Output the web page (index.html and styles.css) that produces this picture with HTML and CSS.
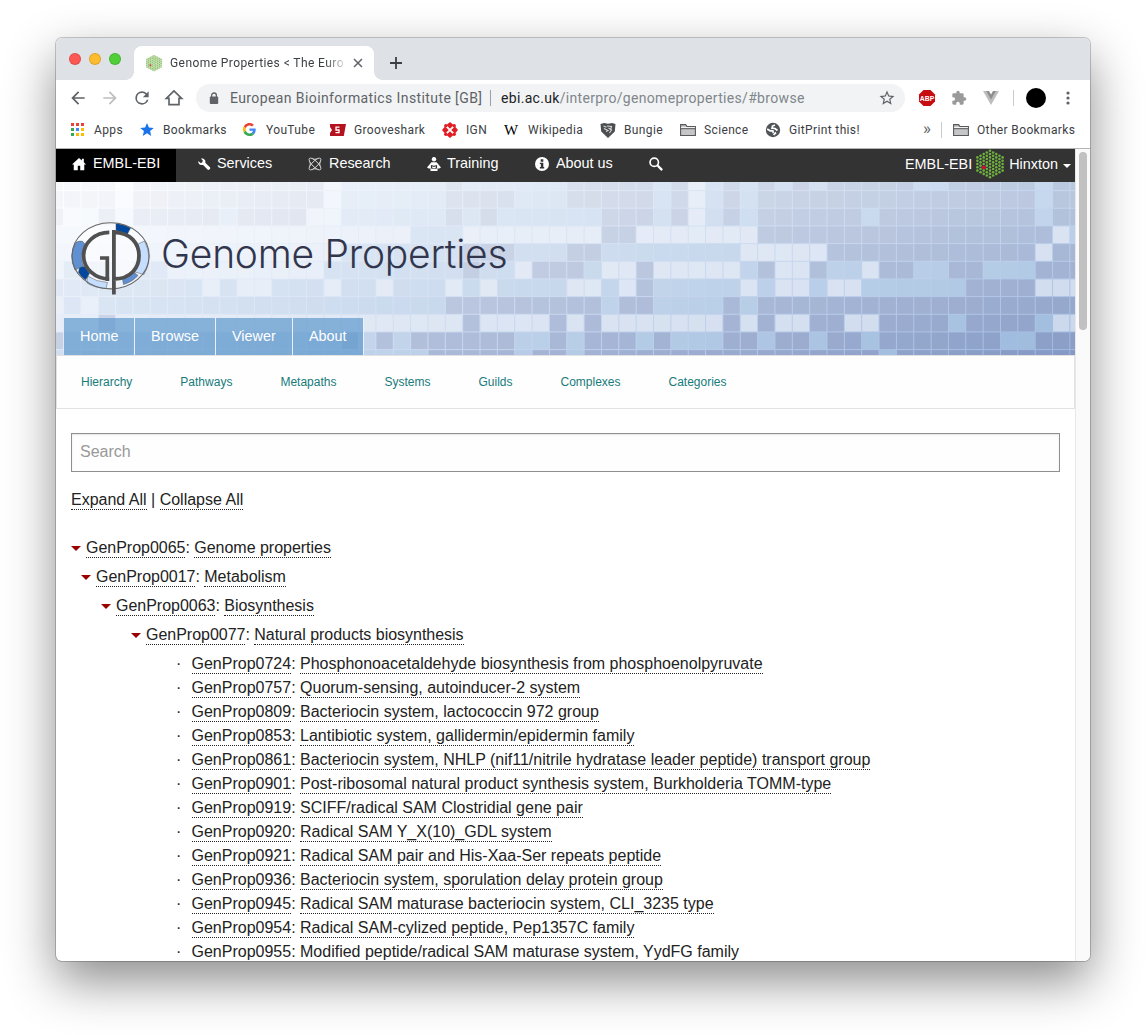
FILE: index.html
```html
<!DOCTYPE html>
<html lang="en">
<head>
<meta charset="utf-8">
<title>Genome Properties</title>
<link rel="stylesheet" href="styles.css">
</head>
<body>
<div class="window">
  <div class="tabstrip">
    <div class="lights"><i class="red"></i><i class="yellow"></i><i class="green"></i></div>
    <div class="tab">
      <svg class="favicon hexlogo" viewBox="0 0 28 30"></svg>
      <span class="tab-title">Genome Properties &lt; The Euro</span>
      <svg class="close" width="10" height="10" viewBox="0 0 10 10"><path d="M1 1l8 8M9 1L1 9" stroke="#5f6368" stroke-width="1.5"/></svg>
    </div>
    <svg class="newtab" width="14" height="14" viewBox="0 0 14 14"><path d="M7 1v12M1 7h12" stroke="#3c4043" stroke-width="1.8"/></svg>
  </div>

  <div class="toolbar">
    <svg class="tool" viewBox="0 0 24 24"><path fill="#5f6368" d="M20 11H7.83l5.59-5.59L12 4l-8 8 8 8 1.41-1.41L7.83 13H20v-2z"/></svg>
    <svg class="tool" viewBox="0 0 24 24"><path fill="#bcbec1" d="M12 4l-1.41 1.41L16.17 11H4v2h12.17l-5.58 5.59L12 20l8-8z"/></svg>
    <svg class="tool" viewBox="0 0 24 24"><path fill="#5f6368" d="M17.65 6.35A7.96 7.96 0 0 0 12 4a8 8 0 1 0 7.73 10h-2.08A6 6 0 1 1 12 6c1.66 0 3.14.69 4.22 1.78L13 11h7V4l-2.35 2.35z"/></svg>
    <svg class="tool" viewBox="0 0 24 24"><path fill="none" stroke="#5f6368" stroke-width="2" d="M12 3.5L2.8 12.4H6V20h12v-7.600h3.200z"/></svg>
    <div class="omnibox">
      <svg class="lock" width="10" height="13" viewBox="0 0 10 13"><path d="M2.600 5V3.400a2.400 2.400 0 0 1 4.800 0V5" fill="none" stroke="#5f6368" stroke-width="1.300"/><rect x=".8" y="4.500" width="8.400" height="7.500" rx="1" fill="#5f6368"/></svg>
      <span class="org">European Bioinformatics Institute [GB]</span>
      <span class="divider"></span>
      <span class="url"><b>ebi.ac.uk</b>/interpro/genomeproperties/#browse</span>
      <svg class="star" width="18" height="18" viewBox="0 0 24 24"><path fill="#5f6368" d="M22 9.240l-7.190-.62L12 2 9.190 8.630 2 9.240l5.460 4.730L5.820 21 12 17.270 18.180 21l-1.630-7.030L22 9.240zM12 15.400l-3.760 2.270 1-4.280-3.320-2.880 4.380-.38L12 6.100l1.710 4.040 4.380.38-3.320 2.880 1 4.280L12 15.400z"/></svg>
    </div>
    <svg class="abp" width="18" height="18" viewBox="0 0 18 18"><path d="M5.500 1h7L17 5.500v7L12.500 17h-7L1 12.500v-7z" fill="#c70d12"/><text x="9" y="11.900" text-anchor="middle" textLength="14.500" lengthAdjust="spacingAndGlyphs">ABP</text></svg>
    <svg class="puzzle" width="16" height="16" viewBox="0 0 24 24"><path fill="#9a9a9a" d="M20.500 11H19V7a2 2 0 0 0-2-2h-4V3.500a2.500 2.500 0 0 0-5 0V5H4a2 2 0 0 0-2 2v3.800h1.500a2.700 2.700 0 0 1 0 5.400H2V20c0 1.100.9 2 2 2h3.800v-1.500a2.700 2.700 0 0 1 5.400 0V22H17a2 2 0 0 0 2-2v-4h1.500a2.500 2.500 0 0 0 0-5z"/></svg>
    <svg class="vue" width="16" height="14" viewBox="0 0 16 14"><path d="M0 0h16L8 14z" fill="#bdbdbd"/><path d="M3.200 0h9.600L8 8.400z" fill="#8e8e8e"/><path d="M6 0h4L8 3.500z" fill="#fff"/></svg>
    <span class="divider tooldiv"></span>
    <span class="avatar"></span>
    <svg class="dots" width="4" height="14" viewBox="0 0 4 14" fill="#5f6368"><circle cx="2" cy="2" r="1.600"/><circle cx="2" cy="7" r="1.600"/><circle cx="2" cy="12" r="1.600"/></svg>
  </div>

  <div class="bookmarks">
    <div class="bm apps"><svg viewBox="0 0 16 16"><g fill="#ea4335"><path d="M1 1h3v3H1zM6 1h3v3H6zM11 1h3v3h-3z"/></g><path fill="#34a853" d="M1 6h3v3H1zM1 11h3v3H1z"/><path fill="#4285f4" d="M6 6h3v3H6z"/><path fill="#fbbc04" d="M11 6h3v3h-3zM6 11h3v3H6zM11 11h3v3h-3z"/></svg>Apps</div>
    <div class="bm marks"><svg viewBox="0 0 16 16"><path fill="#1a73e8" d="M8 1l1.900 4.500 4.900.4-3.700 3.200 1.100 4.800L8 11.300l-4.200 2.600 1.100-4.800L1.200 5.900l4.900-.4z"/></svg>Bookmarks</div>
    <div class="bm youtube"><svg viewBox="0 0 48 48"><path fill="#EA4335" d="M24 9.500c3.500 0 6.700 1.200 9.200 3.600l6.900-6.900A23.900 23.900 0 0 0 2.600 13.200l8 6.200C12.400 13.700 17.700 9.500 24 9.500z"/><path fill="#4285F4" d="M47 24.500c0-1.600-.2-3.100-.4-4.500H24v9h12.900c-.6 3-2.300 5.500-4.800 7.200l7.700 6C44.400 38 47 32 47 24.500z"/><path fill="#FBBC05" d="M10.500 28.600a14.500 14.500 0 0 1 0-9.200l-8-6.200a24 24 0 0 0 0 21.600z"/><path fill="#34A853" d="M24 48c6.500 0 11.900-2.100 15.900-5.800l-7.700-6c-2.200 1.500-4.900 2.300-8.200 2.300-6.300 0-11.600-4.200-13.500-9.900l-8 6.200C6.500 42.600 14.600 48 24 48z"/></svg>YouTube</div>
    <div class="bm groove"><svg viewBox="0 0 16 16"><path d="M0 2h16l-2.200 12H0v-3l2-3-2-3z" fill="#b5121f"/><path d="M9.500 5.200H6V8h3v2.700H5.500" fill="none" stroke="#fff" stroke-width="1.300"/></svg>Grooveshark</div>
    <div class="bm ign"><svg viewBox="0 0 16 16"><g fill="#e31b23"><path d="M4.500 3L8 0l3.500 3L8 6.800zM4.500 13L8 16l3.500-3L8 9.200zM3 4.500L0 8l3 3.500L6.800 8zM13 4.500L16 8l-3 3.500L9.200 8z"/><circle cx="3.800" cy="3.800" r="1.700"/><circle cx="12.200" cy="3.800" r="1.700"/><circle cx="3.800" cy="12.200" r="1.700"/><circle cx="12.200" cy="12.200" r="1.700"/></g></svg>IGN</div>
    <div class="bm wiki"><span class="w">W</span>Wikipedia</div>
    <div class="bm bungie"><svg viewBox="0 0 16 16"><path d="M.5 2L4 1l4 .7L12 1l3.500 1-.7 7.500L8 16 1.200 9.500z" fill="#4c4f52"/><path d="M3.500 4l3 1.200M7 4l4.500.5-1 3.500M4 6.500l4 2-2 1M8.500 6l3 2-2 3" stroke="#d8d8d8" stroke-width="1.100" fill="none"/></svg>Bungie</div>
    <div class="bm science"><svg viewBox="0 0 16 16"><path d="M.6 13.500V2.600h5l1.500 2h8.300v8.900z" fill="#c6c6c6" stroke="#55585c" stroke-width="1.100"/><path d="M1 5.700h14" stroke="#fff"/><path d="M1 6.700h14" stroke="#55585c"/></svg>Science</div>
    <div class="bm git"><svg viewBox="0 0 16 16"><circle cx="8" cy="8" r="7.200" fill="#505357"/><path d="M2.200 7l3 1.800h2.600l.5 2.200M12.500 8.500L10 6.500 7 6.200 7.500 4l2.500-1M8.500 12.800l2.500-2.300" fill="none" stroke="#fff" stroke-width="1.700"/></svg>GitPrint this!</div>
    <span class="more">»</span>
    <span class="divider"></span>
    <div class="bm other"><svg viewBox="0 0 16 16"><path d="M.6 13.500V2.600h5l1.500 2h8.300v8.900z" fill="#c6c6c6" stroke="#55585c" stroke-width="1.100"/><path d="M1 5.700h14" stroke="#fff"/><path d="M1 6.700h14" stroke="#55585c"/></svg>Other Bookmarks</div>
  </div>

  <div class="viewport">
    <div class="page">
      <nav class="masthead">
        <a class="active m1"><svg viewBox="0 0 16 16"><path d="M8 1L0 8.500h2V15h4.600v-5h2.800v5H14V8.500h2l-2.500-2.400V2h-2.200v2z"/></svg>EMBL-EBI</a>
        <a class="m2"><svg viewBox="0 0 16 16"><path d="M1.500 4.500L4 6.800 6 6.200 6.600 4 4.500 1.800C7 1 10.500 3 9.500 6.500l5.300 5.300c.8.900.3 2.500-1.300 2.900-.7.100-1.200-.2-1.500-.5L7 9C3.500 10 1 7.500 1.500 4.500z"/></svg>Services</a>
        <a class="m3"><svg viewBox="0 0 16 16"><g fill="none" stroke="#ddd" stroke-width="1"><ellipse cx="8" cy="8" rx="9" ry="3.200" transform="rotate(45 8 8)"/><ellipse cx="8" cy="8" rx="9" ry="3.200" transform="rotate(-45 8 8)"/><path d="M5 1.500c2 1.400 4 1.400 6 0M5 14.500c2-1.400 4-1.400 6 0M1.500 5c1.400 2 1.400 4 0 6M14.500 5c-1.400 2-1.400 4 0 6"/></g></svg>Research</a>
        <a class="m4"><svg viewBox="0 0 16 16"><circle cx="8" cy="2.600" r="2.500"/><path d="M5 6h6l5 6-2 1h-2v3H4v-3H2l-2-1z"/><path d="M4.500 9L8 10l3.500-1v4L8 13.800 4.500 13z" fill="#333"/><path d="M6 10.700l2 .6 2-.6v1.800l-2 .5-2-.5z"/></svg>Training</a>
        <a class="m5"><svg viewBox="0 0 16 16"><circle cx="8" cy="8" r="8"/><path d="M6.500 2.500h3v2.800h-3zM5.500 6.500h4v5h1V13h-5v-1.500h1.200V8H5.500z" fill="#333"/></svg>About us</a>
        <a class="m6"><svg viewBox="0 0 16 16"><circle cx="6" cy="6" r="4.800" fill="none" stroke="#fff" stroke-width="1.900"/><path d="M9.500 9.500l5.500 5.500" stroke="#fff" stroke-width="2.600"/></svg></a>
        <span class="location"><span>EMBL-EBI</span><svg class="hexlogo" viewBox="0 0 28 30"></svg><span>Hinxton</span><i class="caret"></i></span>
      </nav>

      <header class="banner">
        <svg class="tiles" viewBox="0 0 1019 173" width="1019" height="173"></svg>
        <div class="brand">
          <svg class="logo" width="80" height="73" viewBox="0 0 80 73">
            <ellipse cx="39.600" cy="33.800" rx="38.600" ry="33.100" fill="#fff" fill-opacity=".5"/>
            <g stroke="#555" stroke-width=".5">
              <path d="M45 1.500q9 1 14.500 4.500L56 13q-5-3.500-11-4.500z" fill="#00479d"/>
              <path d="M67 22l6.500-3q9 17-.5 33.500L64 50q7-14 3-28z" fill="#c5deff"/>
              <path d="M51.500 57l11-7 4.500 3.500q-5 6-14.500 9z" fill="#6090d2"/>
              <path d="M16.500 54q9 6 20 6.500l-1.500 6q-11-.5-19-5.500z" fill="#c5deff"/>
              <path d="M8.500 45l5-.5 5 7-4 6.500q-5-3.500-7-7.500z" fill="#00479d"/>
              <path d="M5 20.500q3-2 6.500-1.200L14 22q-6 12-1.500 22L4 48q-7-14 1-27.500z" fill="#6090d2"/>
            </g>
            <ellipse cx="39.600" cy="33.800" rx="38.600" ry="33.100" fill="none" stroke="#666" stroke-width="1.100"/>
            <path d="M38.300 10.400A25.700 23.300 0 0 0 38.300 57M29 36h7.300v23" fill="none" stroke="#505050" stroke-width="3.700"/>
            <path d="M42.900 8v64.500M42.900 10.400C60 10.400 68 22 68 33.700S60 57 42.900 57" fill="none" stroke="#505050" stroke-width="3.800"/>
          </svg>
          <h1>Genome Properties</h1>
        </div>
        <nav class="tabs"><a class="t1">Home</a><a class="t2">Browse</a><a class="t3">Viewer</a><a class="t4">About</a></nav>
      </header>

      <nav class="submenu"><a>Hierarchy</a><a>Pathways</a><a>Metapaths</a><a>Systems</a><a>Guilds</a><a>Complexes</a><a>Categories</a></nav>

      <main>
        <input class="search" type="text" placeholder="Search">
        <p class="actions"><a>Expand All</a> | <a>Collapse All</a></p>
        <div class="node"><i></i><a>GenProp0065</a>: <a>Genome properties</a></div>
        <div class="node lvl1"><i></i><a>GenProp0017</a>: <a>Metabolism</a></div>
        <div class="node lvl2"><i></i><a>GenProp0063</a>: <a>Biosynthesis</a></div>
        <div class="node lvl3"><i></i><a>GenProp0077</a>: <a>Natural products biosynthesis</a></div>
        <ul>
          <li><a>GenProp0724</a>: <a>Phosphonoacetaldehyde biosynthesis from phosphoenolpyruvate</a></li>
          <li><a>GenProp0757</a>: <a>Quorum-sensing, autoinducer-2 system</a></li>
          <li><a>GenProp0809</a>: <a>Bacteriocin system, lactococcin 972 group</a></li>
          <li><a>GenProp0853</a>: <a>Lantibiotic system, gallidermin/epidermin family</a></li>
          <li><a>GenProp0861</a>: <a>Bacteriocin system, NHLP (nif11/nitrile hydratase leader peptide) transport group</a></li>
          <li><a>GenProp0901</a>: <a>Post-ribosomal natural product synthesis system, Burkholderia TOMM-type</a></li>
          <li><a>GenProp0919</a>: <a>SCIFF/radical SAM Clostridial gene pair</a></li>
          <li><a>GenProp0920</a>: <a>Radical SAM Y_X(10)_GDL system</a></li>
          <li><a>GenProp0921</a>: <a>Radical SAM pair and His-Xaa-Ser repeats peptide</a></li>
          <li><a>GenProp0936</a>: <a>Bacteriocin system, sporulation delay protein group</a></li>
          <li><a>GenProp0945</a>: <a>Radical SAM maturase bacteriocin system, CLI_3235 type</a></li>
          <li><a>GenProp0954</a>: <a>Radical SAM-cylized peptide, Pep1357C family</a></li>
          <li><a>GenProp0955</a>: <a>Modified peptide/radical SAM maturase system, YydFG family</a></li>
        </ul>
      </main>
    </div>
    <div class="scrollbar"><div class="thumb"></div></div>
  </div>
</div>
<script src="graphics.js"></script>
</body>
</html>
```

FILE: styles.css
```css
* { box-sizing: border-box; }
body {
  margin: 0;
  height: 1035px;
  padding: 38px 56px 0;
  background: #fff;
  overflow: hidden;
  font-family: "Liberation Sans", Arial, sans-serif;
}
svg { display: block; flex: none; }
.window {
  width: 1034px;
  height: 923px;
  display: flex;
  flex-direction: column;
  overflow: hidden;
  border-radius: 6px;
  background: #fff;
  box-shadow: 0 0 0 1px rgba(0,0,0,.2), 0 20px 50px rgba(0,0,0,.46);
}
.divider { width: 1px; height: 16px; background: #c8cacd; flex: none; }

/* browser tabs */
.tabstrip { flex: none; height: 42px; background: #dee1e6; display: flex; }
.lights { width: 78px; padding: 15px 0 0 13px; display: flex; gap: 8px; }
.lights i { width: 12px; height: 12px; border-radius: 50%; border: 1px solid rgba(0,0,0,.12); }
.red { background: #fc5753; }
.yellow { background: #fdbc2e; }
.green { background: #50cf38; }
.tab {
  position: relative;
  width: 240px;
  height: 34px;
  margin-top: 8px;
  padding-left: 12px;
  border-radius: 8px 8px 0 0;
  background: #fff;
  display: flex;
  align-items: center;
}
.tab::before, .tab::after { content: ""; position: absolute; bottom: 0; width: 8px; height: 8px; }
.tab::before { left: -8px; background: radial-gradient(circle at 0 0, transparent 7.5px, #fff 8px); }
.tab::after { right: -8px; background: radial-gradient(circle at 100% 0, transparent 7.5px, #fff 8px); }
.favicon { width: 16px; height: 17px; margin-right: 8px; background: #c9e2ba; clip-path: polygon(50% 0, 100% 25%, 100% 75%, 50% 100%, 0 75%, 0 25%); opacity: .8; }
.tab-title {
  width: 176px;
  white-space: nowrap;
  font: 12px/16px Roboto, sans-serif;
  letter-spacing: .42px;
  color: #3c4043;
  -webkit-mask-image: linear-gradient(90deg, #000 155px, transparent 178px);
  mask-image: linear-gradient(90deg, #000 155px, transparent 178px);
}
.close { margin-left: 7px; }
.newtab { margin: 18px 0 0 15px; }

/* address bar */
.toolbar { flex: none; height: 36px; padding-left: 12px; display: flex; align-items: center; }
.tool { width: 20px; height: 20px; margin-right: 12px; }
.omnibox {
  width: 709px;
  height: 28px;
  border-radius: 14px;
  padding: 0 9px 0 13px;
  background: #f1f3f4;
  display: flex;
  align-items: center;
  font: 14px/20px Roboto, sans-serif;
  color: #5f6368;
  white-space: nowrap;
}
.lock { margin-right: 11px; }
.org { width: 260px; letter-spacing: .4px; }
.omnibox .divider { background: #9aa0a6; }
.url { margin-left: 10px; flex: 1; letter-spacing: .32px; color: #80868b; }
.url b { font-weight: 400; color: #202124; }
.abp { margin-left: 13px; }
.abp text { font: 700 8px "Liberation Sans", sans-serif; fill: #fff; }
.puzzle { margin-left: 15px; }
.vue { margin-left: 16px; }
.tooldiv { margin-left: 14px; }
.avatar { width: 20px; height: 20px; border-radius: 50%; background: #000; margin-left: 12px; }
.dots { margin-left: 20px; }

/* bookmarks bar */
.bookmarks {
  flex: none;
  height: 33px;
  padding: 0 0 5px 14px;
  border-bottom: 1px solid #b4b4b4;
  display: flex;
  align-items: center;
  font: 12px/16px Roboto, sans-serif;
  letter-spacing: .36px;
  color: #3c4043;
  white-space: nowrap;
}
.bm { display: flex; align-items: center; gap: 8px; }
.bm svg { width: 16px; height: 16px; }
.bm.youtube svg { width: 13px; height: 13px; margin: 0 2px 0 1px; }
.w { width: 16px; font: 15px/16px "Liberation Serif", serif; color: #000; letter-spacing: 0; }
.apps { width: 69px; }
.marks { width: 103px; }
.youtube { width: 88px; }
.groove { width: 112px; }
.ign { width: 62px; }
.wiki { width: 96px; }
.bungie { width: 80px; }
.science { width: 85px; }
.git { width: 158px; }
.more { width: 18px; font-size: 17px; color: #5f6368; padding-bottom: 3px; }
.other { margin-left: 11px; }

/* page */
.viewport { flex: 1; min-height: 0; display: flex; }
.page { width: 1019px; overflow: hidden; }
.scrollbar { width: 15px; background: #fafafa; border-left: 1px solid #e8e8e8; padding: 3px 3px; }
.thumb { width: 8px; height: 178px; border-radius: 4px; background: #c1c1c1; }
.masthead {
  height: 33px;
  background: #333;
  color: #fff;
  font-size: 14.4px;
  line-height: 29px;
  display: flex;
}
.masthead a { display: flex; align-items: center; height: 29px; gap: 7px; }
.masthead a svg { width: 14px; height: 14px; fill: #fff; }
.masthead .active { background: #000; height: 33px; padding: 0 0 4px 16px; }
.masthead .m1 { width: 120px; margin-right: 21px; }
.masthead .m2, .masthead .m4 { gap: 6px; }
.m2 { width: 111px; }
.m3 { width: 119px; }
.m4 { width: 108px; }
.m5 { width: 113px; }
.masthead .m6 { margin-left: 1px; }
.location { margin-left: auto; padding-right: 4px; display: flex; align-items: center; height: 30px; }
.location .hexlogo { width: 28px; height: 30px; margin: 0 5px 0 4px; }
.caret { border: 4px solid transparent; border-top-color: #fff; border-bottom: 0; margin-left: 5px; margin-top: 3px; }

.banner { position: relative; height: 173px; background: #e8eef8; display: flex; flex-direction: column; justify-content: space-between; }
.tiles { position: absolute; inset: 0; }
.brand { position: relative; display: flex; padding: 40px 0 0 15px; }
h1 {
  margin: 8px 0 0 10px;
  font: 300 39px/48px Inter, "Liberation Sans", sans-serif;
  letter-spacing: -.24px;
  color: #32364d;
  white-space: nowrap;
}
.tabs { position: relative; display: flex; padding-left: 8px; }
.tabs a {
  height: 37px;
  padding-left: 16px;
  border-right: 1px solid #e9f0f9;
  background: rgba(85, 147, 202, .66);
  font-size: 14.4px;
  line-height: 37px;
  color: #fff;
}
.t1 { width: 71px; }
.t2 { width: 81px; }
.t3 { width: 77px; }
.t4 { width: 71px; }
.submenu {
  height: 54px;
  border: 1px solid #e2e2e2;
  background: #fefefe;
  padding-left: 24px;
  display: flex;
  gap: 48px;
  font-size: 12px;
  line-height: 52px;
  color: #177b7b;
}
main { padding: 24px 15px 0; font-size: 16px; line-height: 24px; color: #222; }
.search {
  display: block;
  width: 100%;
  height: 39px;
  border: 1px solid #8f8f8f;
  padding: 0 8px 1px;
  background: #fefefe;
  box-shadow: inset 0 1px 2px rgba(0,0,0,.1);
  font: 16px "Liberation Sans", sans-serif;
}
.search::placeholder { color: #999; }
.actions { margin: 16px 0 24px; }
main a { border-bottom: 1px dotted #222; padding-bottom: 1px; }
.node { height: 29px; white-space: pre; letter-spacing: -.02px; }
.node i { display: inline-block; border: 5px solid transparent; border-top-color: #990000; border-bottom: 0; margin-right: 5px; vertical-align: 2px; }
.lvl1 { padding-left: 10px; }
.lvl2 { padding-left: 30px; }
.lvl3 { padding-left: 60px; }
ul { list-style: none; margin: 0; padding: 0 0 0 105px; white-space: nowrap; }
li::before { content: "·"; display: inline-block; width: 15.500px; }
```

FILE: graphics.js
```js
const SVG = "http://www.w3.org/2000/svg";

function shape(parent, name, attrs) {
  const el = document.createElementNS(SVG, name);
  for (const key in attrs) el.setAttribute(key, attrs[key]);
  parent.appendChild(el);
}

// Banner mosaic: l = light, b = blue, d = dark tile
const rows = [
  "ddddldddddddddddlbbb" + "bbbdbbbbbbdddddbdlbd" + "bdbdbdddddbbdddddbdd",
  "ddddldddddddddddlbbb" + "bbbddddbbbdddddbdlbd" + "bddddddddddddddddbdd",
  "dlldldddddbddddllbbb" + "bbbdbdbbbbbbdddbdlbd" + "bddddddbdddddddddbdd",
  "llllllllllllllllllll" + "lbbbllllllllddllllll" + "ldddddddddddddddddlb",
  "lllllllllllllllllbbb" + "bbbbdddbbbddbbbbbbbb" + "lllllddddddddddddldd",
  "lbbblbblllllllllbbbb" + "bbbbdbbldddblldlllll" + "bdlldbblddbbddbbbddd",
  "bbbbbbbbblbllbbblbbl" + "bbblblbbbbllbldbbbbb" + "lbllbllbbbbbbddddlll",
  "lblbbbbbbbbbbbbbbbbb" + "bbbdddddddddbddbbbbd" + "bddddddddddddddddddd",
  "llldllllllllllllllll" + "lllldlllldldllllllld" + "ldllddllddddbddddbll",
  "dbbbbbbbbbbbbbbbbdbd" + "bddddddbbdbdddbdbbbd" + "dbddbddbdddddddbbddd",
  "bbbbbbbbbbbbbbbbbbbb" + "bbdddddbddbddddddddd" + "ddddddddbddddddddddd"
];

// Corner colours: top-left, top-right, bottom-left, bottom-right
const palette = {
  l: [[252, 253, 255], [222, 231, 245], [226, 234, 246], [198, 212, 233]],
  b: [[247, 249, 253], [198, 216, 237], [207, 221, 239], [150, 182, 219]],
  d: [[247, 248, 251], [186, 200, 223], [192, 203, 227], [130, 151, 195]],
  line: [[254, 255, 255], [198, 215, 239], [221, 231, 248], [156, 182, 222]]
};

function tint(kind, u, v) {
  const c = palette[kind];
  return "rgb(" + [0, 1, 2].map(i => Math.round(
    (c[0][i] * (1 - u) + c[1][i] * u) * (1 - v) + (c[2][i] * (1 - u) + c[3][i] * u) * v
  )).join(",") + ")";
}

const tiles = document.querySelector(".tiles");
const stepX = 17.35, stepY = 17.67;
rows.forEach((row, r) => {
  [...row].forEach((kind, k) => {
    const x = 7.6 + stepX * (k - 1), y = 8.6 + stepY * (r - 1);
    const u = Math.min(1, Math.max(0, x / 1019)), v = Math.min(1, Math.max(0, y / 173));
    shape(tiles, "rect", { x, y, width: stepX + .5, height: stepY + .5, fill: tint("line", u, v) });
    shape(tiles, "rect", { x: x + .5, y: y + .5, width: stepX - 1, height: stepY - 1, fill: tint(kind, u, v) });
  });
});

// Hexagon made of dot columns, with one highlighted cluster
document.querySelectorAll(".hexlogo").forEach(svg => {
  for (let i = -4; i <= 4; i++) {
    const n = 9 - Math.abs(i);
    for (let j = 0; j < n; j++) {
      const cy = 15 + (j - (n - 1) / 2) * 3.3;
      const hot = i === -2 && j === 4;
      shape(svg, "circle", { cx: 14 + i * 3.15, cy, r: hot ? 1.9 : 1.3, fill: hot ? "#d0103a" : "#70b040" });
    }
  }
});
```
